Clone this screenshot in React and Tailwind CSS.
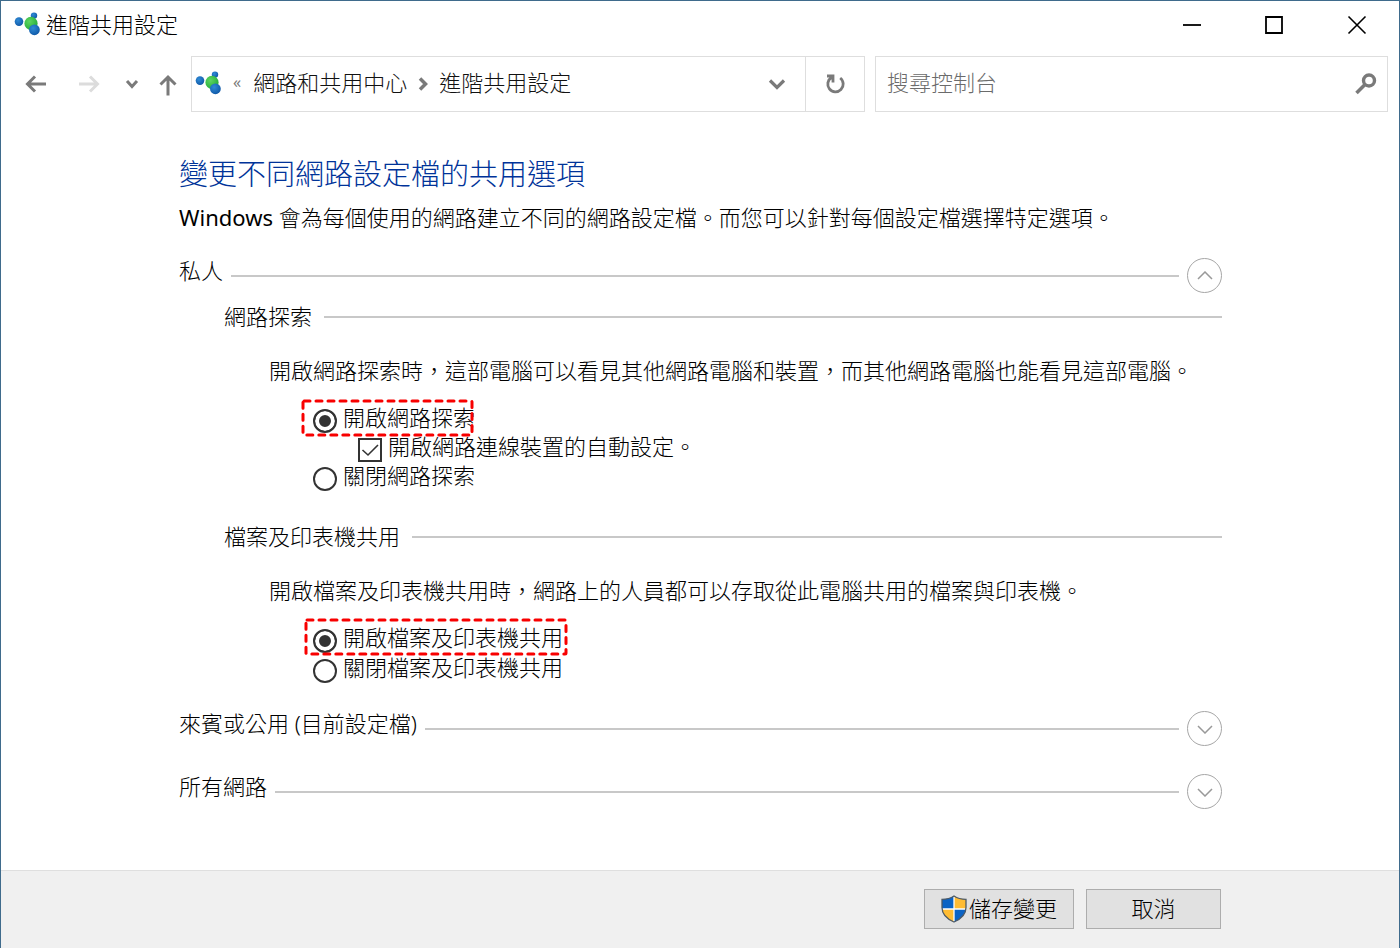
import { useState } from "react";

function NetworkLogo() {
  return (
    <svg width="26" height="26" viewBox="0 0 26 26" className="shrink-0" aria-hidden="true">
      <defs>
        <radialGradient id="ball-blue" cx="0.38" cy="0.35" r="0.7">
          <stop offset="0" stopColor="#2f8ad6" />
          <stop offset="1" stopColor="#0f58a6" />
        </radialGradient>
        <radialGradient id="ball-green" cx="0.38" cy="0.35" r="0.75">
          <stop offset="0" stopColor="#5fd661" />
          <stop offset="1" stopColor="#1fa838" />
        </radialGradient>
      </defs>
      <circle cx="20" cy="3.600" r="3.200" fill="url(#ball-blue)" />
      <circle cx="5" cy="9.600" r="4.300" fill="url(#ball-blue)" />
      <circle cx="17" cy="11.400" r="6.600" fill="url(#ball-green)" />
      <circle cx="20.400" cy="17.800" r="5.400" fill="url(#ball-blue)" />
    </svg>
  );
}

function Stroke({ d, w = 24, h = 24, width = 3, className = "" }) {
  return (
    <svg width={w} height={h} viewBox={`0 0 ${w} ${h}`} fill="none" stroke="currentColor" strokeWidth={width} className={`shrink-0 ${className}`} aria-hidden="true">
      <path d={d} />
    </svg>
  );
}

function Shield() {
  return (
    <svg width="26" height="28" viewBox="0 0 26 28" className="shrink-0" aria-hidden="true">
      <clipPath id="shield-clip">
        <path d="M13 1C9.500 3.400 5.500 4.300 1 4.300V12.500C1 19.500 6 24 13 27C20 24 25 19.500 25 12.500V4.300C20.500 4.300 16.500 3.400 13 1Z" />
      </clipPath>
      <g clipPath="url(#shield-clip)">
        <rect width="13" height="14" fill="#0b63c4" />
        <rect x="13" width="13" height="14" fill="#ffbc33" />
        <rect y="14" width="13" height="14" fill="#ffbc33" />
        <rect x="13" y="14" width="13" height="14" fill="#0b63c4" />
        <path d="M13 0V28M0 14H26" stroke="#fff" strokeWidth="1.300" />
      </g>
      <path d="M13 1C9.500 3.400 5.500 4.300 1 4.300V12.500C1 19.500 6 24 13 27C20 24 25 19.500 25 12.500V4.300C20.500 4.300 16.500 3.400 13 1Z" fill="none" stroke="#4d5a66" strokeWidth="1.300" />
    </svg>
  );
}

function DashedFrame({ className }) {
  return (
    <svg className={`pointer-events-none absolute overflow-visible ${className}`} aria-hidden="true">
      <rect width="100%" height="100%" rx="1" fill="none" stroke="#f80000" strokeWidth="3" strokeDasharray="6 6" strokeLinecap="round" />
    </svg>
  );
}

function ProfileHeader({ title, open, onToggle }) {
  return (
    <div className="flex items-center">
      <h2 className="-mt-3 whitespace-nowrap">{title}</h2>
      <span className="mx-2 h-0.5 flex-1 bg-[#c8c8c8]" />
      <button type="button" aria-label={title} aria-expanded={open} onClick={onToggle} className="flex size-[35px] items-center justify-center rounded-full border border-[#a6a6a6] text-[#999]">
        <Stroke w={16} h={10} width={1.5} d={open ? "M1 8L8 1L15 8" : "M1 2L8 9L15 2"} />
      </button>
    </div>
  );
}

function SectionHeader({ title }) {
  return (
    <div className="flex h-8 items-center">
      <h3 className="pb-0.5 whitespace-nowrap">{title}</h3>
      <span className="ml-3 h-0.5 flex-1 bg-[#c8c8c8]" />
    </div>
  );
}

function Radio({ name, label, checked, onChange, frame }) {
  return (
    <label className="relative flex h-[30px] w-fit items-center gap-1.5">
      <input type="radio" name={name} checked={checked} onChange={onChange} className="mt-1.5 size-6 shrink-0 appearance-none rounded-full border-2 border-[#333] bg-white checked:bg-[#333] checked:shadow-[inset_0_0_0_4px_#fff]" />
      <span className="pb-0.5 whitespace-nowrap">{label}</span>
      {frame && <DashedFrame className={frame} />}
    </label>
  );
}

export default function App() {
  const [open, setOpen] = useState({ private: true, guest: false, all: false });
  const [discovery, setDiscovery] = useState(true);
  const [auto, setAuto] = useState(true);
  const [sharing, setSharing] = useState(true);
  const toggle = (key) => setOpen({ ...open, [key]: !open[key] });

  return (
    <div lang="zh-Hant" className="flex min-h-screen flex-col border border-b-0 border-[#3f6b8c] bg-white font-['Noto_Sans','Noto_Sans_CJK_TC',sans-serif] text-[22px] leading-[30px] font-light text-black">
      <header className="flex h-12 items-center pl-[13px]">
        <NetworkLogo />
        <h1 className="ml-1.5 flex-1 pb-0.5">進階共用設定</h1>
        <div className="flex text-black">
          <button type="button" aria-label="最小化" className="flex h-12 w-[82px] items-center justify-center">
            <Stroke w={20} h={20} width={1.800} d="M1 10H19" />
          </button>
          <button type="button" aria-label="最大化" className="flex h-12 w-[82px] items-center justify-center">
            <Stroke w={20} h={20} width={1.800} d="M2 2H18V18H2Z" />
          </button>
          <button type="button" aria-label="關閉" className="flex h-12 w-[84px] items-center justify-center">
            <Stroke w={20} h={20} width={1.600} d="M1.500 1.500L18.500 18.500M18.500 1.500L1.500 18.500" />
          </button>
        </div>
      </header>

      <nav className="mt-[7px] flex h-14 items-center pr-[11px] text-[#7a7a7a]">
        <button type="button" aria-label="上一頁" className="ml-6">
          <Stroke d="M21 12H3M10 4.500L2.500 12L10 19.500" />
        </button>
        <button type="button" aria-label="下一頁" className="ml-7 text-[#dcdcdc]">
          <Stroke d="M2 12H20M13 4.500L20.500 12L13 19.500" />
        </button>
        <button type="button" aria-label="最近的位置" className="ml-6">
          <Stroke w={14} h={12} width={3} d="M2 3L7 8.500L12 3" />
        </button>
        <button type="button" aria-label="上一層" className="ml-[17px]">
          <Stroke d="M12 23.500V5.500M4.500 12.500L12 5L19.500 12.500" />
        </button>
        <div className="ml-[11px] flex h-14 flex-[672] items-stretch border border-[#dedede]">
          <div className="flex flex-1 items-center pl-[3px]">
            <NetworkLogo />
            <span className="ml-3 pb-1 text-base font-normal">«</span>
            <a href="#center" className="ml-3 pb-1 text-[#111]">網路和共用中心</a>
            <Stroke w={12} h={16} width={3.500} d="M3 2.500L8.500 8L3 13.500" className="mx-2.5" />
            <a href="#advanced" className="pb-1 text-[#111]">進階共用設定</a>
          </div>
          <button type="button" aria-label="先前的位置" className="flex w-14 items-center justify-center">
            <Stroke w={20} h={14} width={3.200} d="M3 3.500L10 10.500L17 3.500" />
          </button>
          <button type="button" aria-label="重新整理" className="flex w-[59px] items-center justify-center border-l border-[#dedede]">
            <Stroke d="M17.200 6A7.700 7.700 0 1 1 8.500 5.500M4 4H10V10.500" width={2.800} />
          </button>
        </div>
        <div className="ml-2.5 flex h-14 flex-[490] items-center border border-[#dedede] pr-2.5 pl-[11px]">
          <input type="search" aria-label="搜尋控制台" placeholder="搜尋控制台" className="min-w-0 flex-1 bg-transparent pb-1 outline-none placeholder:text-[#6b6b6b]" />
          <button type="button" aria-label="搜尋">
            <svg width="22" height="22" viewBox="0 0 22 22" fill="none" stroke="currentColor" strokeWidth="3.400" aria-hidden="true">
              <circle cx="14" cy="7.500" r="5.500" />
              <path d="M10 11.500L1.500 20" strokeWidth="3.600" />
            </svg>
          </button>
        </div>
      </nav>

      <main className="flex-1 pt-11 pr-[177px] pb-8 pl-[178px]">
        <h2 className="text-[29px] leading-9 text-[#003399]">變更不同網路設定檔的共用選項</h2>
        <p className="mt-2.5 whitespace-nowrap"><span className="font-normal">Windows</span> 會為每個使用的網路建立不同的網路設定檔。而您可以針對每個設定檔選擇特定選項。</p>

        <section className="mt-[26px]">
          <ProfileHeader title="私人" open={open.private} onToggle={() => toggle("private")} />
          {open.private && (
            <div className="pl-[45px]">
              <div className="mt-2">
                <SectionHeader title="網路探索" />
                <div className="pl-[45px]">
                  <p className="mt-[22px] whitespace-nowrap">開啟網路探索時，這部電腦可以看見其他網路電腦和裝置，而其他網路電腦也能看見這部電腦。</p>
                  <div className="mt-[18px] pl-11">
                    <Radio name="discovery" label="開啟網路探索" checked={discovery} onChange={() => setDiscovery(true)} frame="-top-0.5 -left-2.5 h-[34px] w-[169px]" />
                    <label className="ml-[45px] flex h-7 w-fit items-center gap-1.5">
                      <span className="relative mt-1.5 size-6">
                        <input type="checkbox" checked={auto} onChange={() => setAuto(!auto)} className="peer block size-6 appearance-none border-2 border-[#333] bg-white" />
                        <Stroke width={1.600} d="M4.500 12L10 17L20 7" className="pointer-events-none absolute inset-0 hidden text-[#333] peer-checked:block" />
                      </span>
                      <span className="pb-0.5 whitespace-nowrap">開啟網路連線裝置的自動設定。</span>
                    </label>
                    <Radio name="discovery" label="關閉網路探索" checked={!discovery} onChange={() => setDiscovery(false)} />
                  </div>
                </div>
              </div>
              <div className="mt-[30px]">
                <SectionHeader title="檔案及印表機共用" />
                <div className="pl-[45px]">
                  <p className="mt-[22px] whitespace-nowrap">開啟檔案及印表機共用時，網路上的人員都可以存取從此電腦共用的檔案與印表機。</p>
                  <div className="mt-[18px] pl-11">
                    <Radio name="sharing" label="開啟檔案及印表機共用" checked={sharing} onChange={() => setSharing(true)} frame="-top-[3px] -left-[7px] h-[34px] w-[260px]" />
                    <Radio name="sharing" label="關閉檔案及印表機共用" checked={!sharing} onChange={() => setSharing(false)} />
                  </div>
                </div>
              </div>
            </div>
          )}
        </section>

        <section className="mt-7">
          <ProfileHeader title="來賓或公用 (目前設定檔)" open={open.guest} onToggle={() => toggle("guest")} />
        </section>
        <section className="mt-7">
          <ProfileHeader title="所有網路" open={open.all} onToggle={() => toggle("all")} />
        </section>
      </main>

      <footer className="flex h-[78px] items-center justify-end gap-3 border-t border-[#dfdfdf] bg-[#f0f0f0] pr-[178px] pb-px">
        <button type="button" className="flex h-10 w-[150px] items-center justify-center gap-0.5 border border-[#adadad] bg-[#e1e1e1]">
          <Shield />
          <span className="pb-0.5">儲存變更</span>
        </button>
        <button type="button" className="h-10 w-[135px] border border-[#adadad] bg-[#e1e1e1] pb-0.5">取消</button>
      </footer>
    </div>
  );
}
